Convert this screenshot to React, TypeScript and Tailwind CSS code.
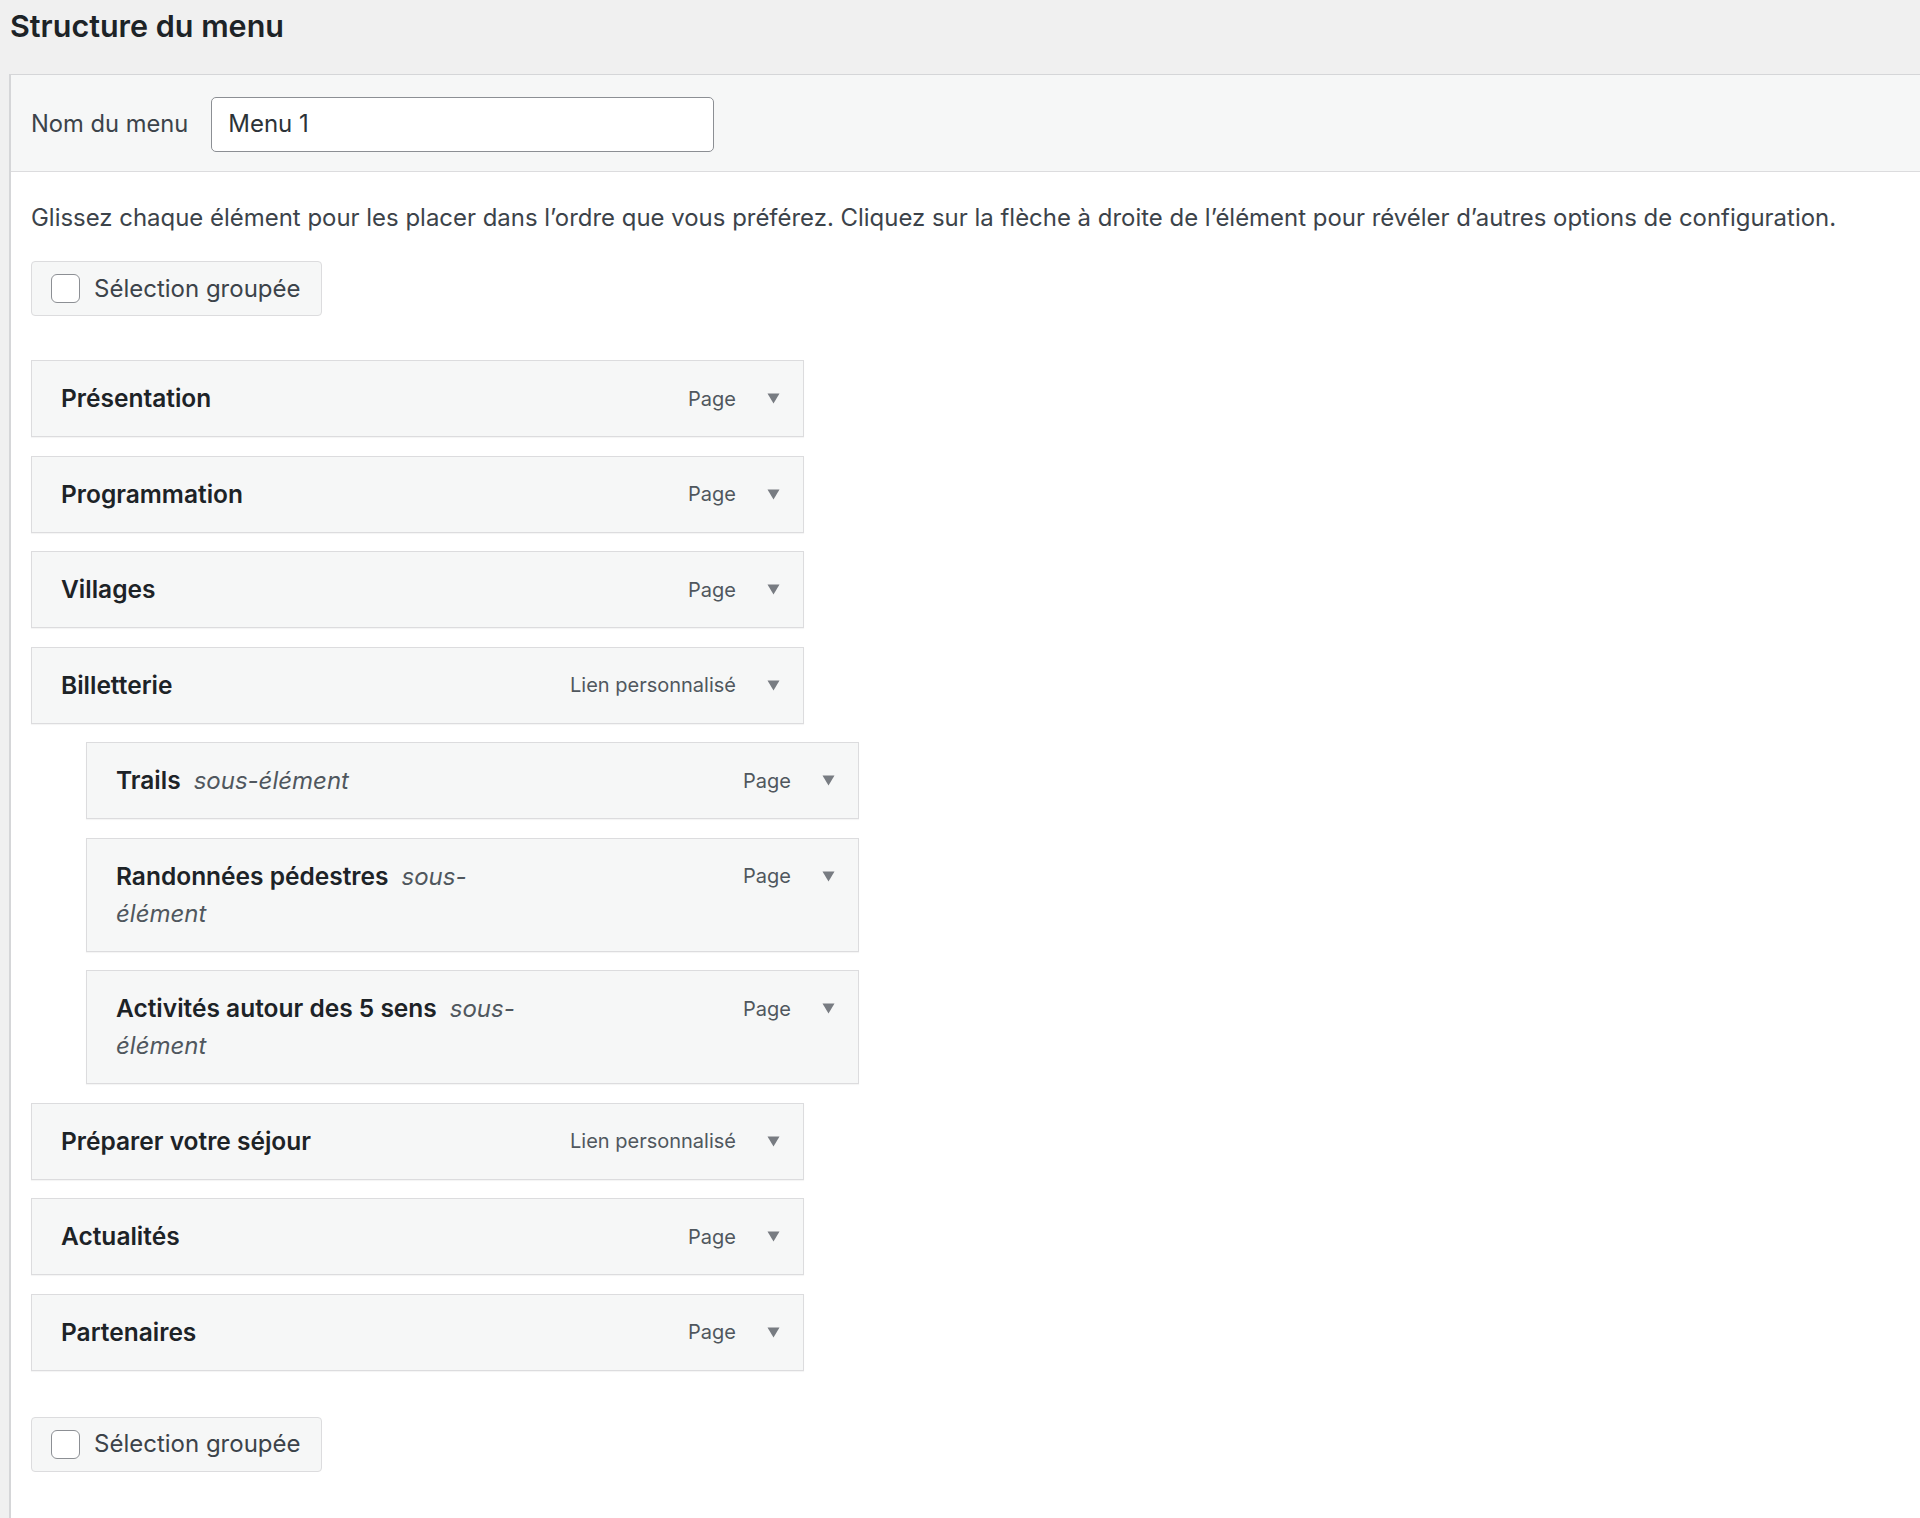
import React from 'react';

type MenuItem = {
  title: string;
  type: string;
  depth: number;
  sub?: 'inline' | 'wrap';
};

const menuItems: MenuItem[] = [
  { title: 'Présentation', type: 'Page', depth: 0 },
  { title: 'Programmation', type: 'Page', depth: 0 },
  { title: 'Villages', type: 'Page', depth: 0 },
  { title: 'Billetterie', type: 'Lien personnalisé', depth: 0 },
  { title: 'Trails', type: 'Page', depth: 1, sub: 'inline' },
  { title: 'Randonnées pédestres', type: 'Page', depth: 1, sub: 'wrap' },
  { title: 'Activités autour des 5 sens', type: 'Page', depth: 1, sub: 'wrap' },
  { title: 'Préparer votre séjour', type: 'Lien personnalisé', depth: 0 },
  { title: 'Actualités', type: 'Page', depth: 0 },
  { title: 'Partenaires', type: 'Page', depth: 0 },
];

const BulkSelect = () => (
  <label className="inline-flex items-center gap-[14px] h-[55px] pl-[19px] pr-[20px] bg-[#f6f7f7] border border-[#dcdcde] rounded-[4px] text-[24px] text-[#3c434a]">
    <span className="block w-[29px] h-[29px] rounded-[6px] border-[1.5px] border-[#8c8f94] bg-white" />
    Sélection groupée
  </label>
);

const Arrow = () => (
  <svg width="13" height="11" viewBox="0 0 13 11" className="shrink-0">
    <path d="M0.5 0.5 H12.5 L6.5 10.5 Z" fill="#787c82" />
  </svg>
);

const MenuItemRow = ({ item }: { item: MenuItem }) => (
  <li className={item.depth === 1 ? 'ml-[55px]' : ''}>
    <div className="w-[773px] flex items-start justify-between bg-[#f6f7f7] border border-[#dcdcde] shadow-[0_1px_1px_rgba(0,0,0,0.04)] pl-[29px] pr-[23px] py-[19px]">
      <div className="w-[450px] text-[24.5px] leading-[37px] text-[#1d2327]">
        <span className="font-semibold">{item.title}</span>
        {item.sub === 'inline' && (
          <span className="ml-[13px] text-[24px] italic text-[#50575e]">sous-élément</span>
        )}
        {item.sub === 'wrap' && (
          <>
            <span className="ml-[13px] text-[24px] italic text-[#50575e]">sous-</span>
            <span className="block text-[24px] leading-[37px] italic text-[#50575e]">élément</span>
          </>
        )}
      </div>
      <div className="flex items-center gap-[31px] h-[37px]">
        <span className="text-[20px] text-[#50575e]">{item.type}</span>
        <Arrow />
      </div>
    </div>
  </li>
);

export default function App() {
  return (
    <div className="min-h-screen bg-[#f0f0f0] font-['Inter','Liberation_Sans',sans-serif] antialiased">
      {/* Page title */}
      <div className="h-[74px] pl-[10px] pt-[7px]">
        <h2 className="text-[30.5px] leading-[38px] font-semibold text-[#1d2327]">Structure du menu</h2>
      </div>

      {/* Menu structure panel */}
      <div className="ml-[9px] bg-white border-l-2 border-t border-[#d5d6d8] min-h-[1444px]">
        {/* Header */}
        <div className="h-[97px] flex items-center gap-[23px] pl-[20px] pt-[2px] bg-[#f6f7f7] border-b border-[#dcdcde]">
          <label className="text-[23.7px] text-[#3c434a]">Nom du menu</label>
          <div className="w-[503px] h-[55px] flex items-center px-[16px] bg-white border-[1.5px] border-[#8c8f94] rounded-[5px] text-[24px] text-[#2c3338]">
            Menu 1
          </div>
        </div>

        {/* Body */}
        <div className="pl-[20px] pt-[31px] pb-[46px]">
          <p className="text-[23.95px] leading-[30px] text-[#3c434a]">
            Glissez chaque élément pour les placer dans l’ordre que vous préférez. Cliquez sur la flèche à droite de l’élément pour révéler d’autres options de configuration.
          </p>

          <div className="mt-[28px]">
            <BulkSelect />
          </div>

          <ul className="mt-[44px] flex flex-col gap-[18.5px]">
            {menuItems.map((item) => (
              <MenuItemRow key={item.title} item={item} />
            ))}
          </ul>

          <div className="mt-[46px]">
            <BulkSelect />
          </div>
        </div>
      </div>
    </div>
  );
}
